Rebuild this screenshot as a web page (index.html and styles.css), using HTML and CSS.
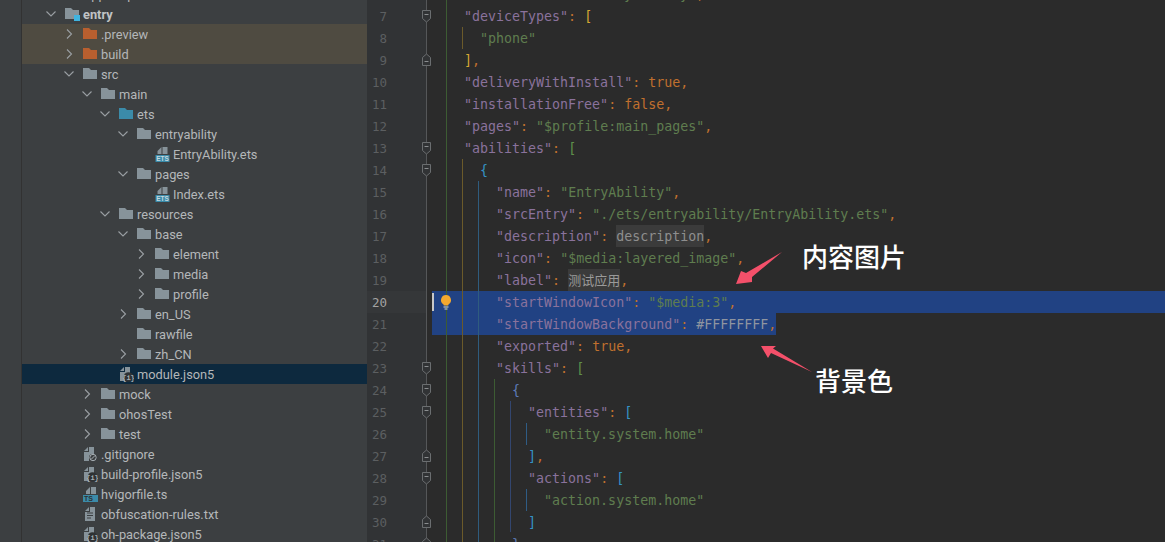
FILE: index.html
```html
<!DOCTYPE html>
<html lang="en">
<head>
<meta charset="utf-8">
<title>module.json5</title>
<link rel="stylesheet" href="styles.css">
</head>
<body>
<svg class="defs" width="0" height="0" aria-hidden="true">
  <symbol id="chev-r" viewBox="0 0 10 12"><path d="M3 1.5 7.5 6 3 10.5" fill="none" stroke="#9a9fa3" stroke-width="1.1"/></symbol>
  <symbol id="chev-d" viewBox="0 0 12 10"><path d="M1.5 2.5 6 7l4.500-4.500" fill="none" stroke="#9a9fa3" stroke-width="1.1"/></symbol>
  <symbol id="folder" viewBox="0 0 14 14"><path d="M0 1h6l2 2h6v9H0z"/></symbol>
  <symbol id="git" viewBox="0 0 15 16">
    <path d="M1 15V5l4-4v4H1zM6 1h5v7H8l-2 2v5H1V6h5z" fill="#87939a"/>
    <circle cx="10" cy="11.500" r="3.200" fill="none" stroke="#a6adb2"/>
    <path d="M8 13.500l4-4" stroke="#a6adb2"/>
  </symbol>
  <symbol id="txt" viewBox="0 0 15 16">
    <path d="M2 15V5l4-4v4H2zM7 1h5v14H2V6h5z" fill="#87939a"/>
    <path d="M4 7h6M4 9.500h6M4 12h4" stroke="#3c3f41"/>
  </symbol>
  <symbol id="fold-open" viewBox="0 0 10 13"><path d="M.5.500h8v8l-4 3.500-4-3.500z" fill="#313335" stroke="#6b6e70"/><path d="M2.500 4.500h4" stroke="#8a8d8f"/></symbol>
  <symbol id="fold-close" viewBox="0 0 10 13"><path d="M.5 12.500h8v-8L4.500 1 .5 4.500z" fill="#313335" stroke="#6b6e70"/><path d="M2.500 8.500h4" stroke="#8a8d8f"/></symbol>
</svg>

<div class="window">
  <aside class="sidebar">
    <div class="stripe"></div>
    <div class="tree">
      <div class="row l0"><span class="chev"><svg class="cr"><use href="#chev-r"/></svg></span><svg class="ico gray"><use href="#folder"/></svg><span>AppScope</span></div>
      <div class="row l0"><span class="chev"><svg class="cd"><use href="#chev-d"/></svg></span><span class="module-ico"><svg class="ico gray"><use href="#folder"/></svg><i class="badge"></i></span><b>entry</b></div>
      <div class="row l1 excluded"><span class="chev"><svg class="cr"><use href="#chev-r"/></svg></span><svg class="ico orange"><use href="#folder"/></svg><span>.preview</span></div>
      <div class="row l1 excluded"><span class="chev"><svg class="cr"><use href="#chev-r"/></svg></span><svg class="ico orange"><use href="#folder"/></svg><span>build</span></div>
      <div class="row l1"><span class="chev"><svg class="cd"><use href="#chev-d"/></svg></span><svg class="ico gray"><use href="#folder"/></svg><span>src</span></div>
      <div class="row l2"><span class="chev"><svg class="cd"><use href="#chev-d"/></svg></span><svg class="ico gray"><use href="#folder"/></svg><span>main</span></div>
      <div class="row l3"><span class="chev"><svg class="cd"><use href="#chev-d"/></svg></span><svg class="ico blue"><use href="#folder"/></svg><span>ets</span></div>
      <div class="row l4"><span class="chev"><svg class="cd"><use href="#chev-d"/></svg></span><svg class="ico gray"><use href="#folder"/></svg><span>entryability</span></div>
      <div class="row l5"><span class="chev"></span><svg class="ico file" viewBox="0 0 14 16"><path d="M2 8V5l4-4v7zM7 1h5v7H7z" fill="#87939a"/><rect x="0" y="9" width="14" height="7" fill="#3b8ba9"/><text x="7" y="15" class="tag">ETS</text></svg><span>EntryAbility.ets</span></div>
      <div class="row l4"><span class="chev"><svg class="cd"><use href="#chev-d"/></svg></span><svg class="ico gray"><use href="#folder"/></svg><span>pages</span></div>
      <div class="row l5"><span class="chev"></span><svg class="ico file" viewBox="0 0 14 16"><path d="M2 8V5l4-4v7zM7 1h5v7H7z" fill="#87939a"/><rect x="0" y="9" width="14" height="7" fill="#3b8ba9"/><text x="7" y="15" class="tag">ETS</text></svg><span>Index.ets</span></div>
      <div class="row l3"><span class="chev"><svg class="cd"><use href="#chev-d"/></svg></span><svg class="ico gray"><use href="#folder"/></svg><span>resources</span></div>
      <div class="row l4"><span class="chev"><svg class="cd"><use href="#chev-d"/></svg></span><svg class="ico gray"><use href="#folder"/></svg><span>base</span></div>
      <div class="row l5"><span class="chev"><svg class="cr"><use href="#chev-r"/></svg></span><svg class="ico gray"><use href="#folder"/></svg><span>element</span></div>
      <div class="row l5"><span class="chev"><svg class="cr"><use href="#chev-r"/></svg></span><svg class="ico gray"><use href="#folder"/></svg><span>media</span></div>
      <div class="row l5"><span class="chev"><svg class="cr"><use href="#chev-r"/></svg></span><svg class="ico gray"><use href="#folder"/></svg><span>profile</span></div>
      <div class="row l4"><span class="chev"><svg class="cr"><use href="#chev-r"/></svg></span><svg class="ico gray"><use href="#folder"/></svg><span>en_US</span></div>
      <div class="row l4"><span class="chev"></span><svg class="ico gray"><use href="#folder"/></svg><span>rawfile</span></div>
      <div class="row l4"><span class="chev"><svg class="cr"><use href="#chev-r"/></svg></span><svg class="ico gray"><use href="#folder"/></svg><span>zh_CN</span></div>
      <div class="row l3 selected"><span class="chev"></span><svg class="ico file" viewBox="0 0 15 16"><path d="M1 15V5l4-4v4H1zM6 1h5v6H8l-2 3v5H1V6h5z" fill="#87939a"/><circle cx="9.500" cy="11" r="4.800" fill="#2f3234"/><text x="9.500" y="13.500" class="brace">{i}</text></svg><span>module.json5</span></div>
      <div class="row l2"><span class="chev"><svg class="cr"><use href="#chev-r"/></svg></span><svg class="ico gray"><use href="#folder"/></svg><span>mock</span></div>
      <div class="row l2"><span class="chev"><svg class="cr"><use href="#chev-r"/></svg></span><svg class="ico gray"><use href="#folder"/></svg><span>ohosTest</span></div>
      <div class="row l2"><span class="chev"><svg class="cr"><use href="#chev-r"/></svg></span><svg class="ico gray"><use href="#folder"/></svg><span>test</span></div>
      <div class="row l1"><span class="chev"></span><svg class="ico file"><use href="#git"/></svg><span>.gitignore</span></div>
      <div class="row l1"><span class="chev"></span><svg class="ico file" viewBox="0 0 15 16"><path d="M1 15V5l4-4v4H1zM6 1h5v6H8l-2 3v5H1V6h5z" fill="#87939a"/><circle cx="9.500" cy="11" r="4.800" fill="#2f3234"/><text x="9.500" y="13.500" class="brace">{i}</text></svg><span>build-profile.json5</span></div>
      <div class="row l1"><span class="chev"></span><svg class="ico file" viewBox="0 0 15 16"><path d="M3 8V5l4-4v7zM8 1h5v7H8z" fill="#87939a"/><rect x="0" y="9" width="15" height="7" fill="#3b8ba9"/><text x="5.500" y="15" class="tag dark">TS</text></svg><span>hvigorfile.ts</span></div>
      <div class="row l1"><span class="chev"></span><svg class="ico file"><use href="#txt"/></svg><span>obfuscation-rules.txt</span></div>
      <div class="row l1"><span class="chev"></span><svg class="ico file" viewBox="0 0 15 16"><path d="M1 15V5l4-4v4H1zM6 1h5v6H8l-2 3v5H1V6h5z" fill="#87939a"/><circle cx="9.500" cy="11" r="4.800" fill="#2f3234"/><text x="9.500" y="13.500" class="brace">{i}</text></svg><span>oh-package.json5</span></div>
    </div>
  </aside>

  <main class="editor">
    <div class="gutter">
      <div class="num">6</div>
      <div class="num">7</div>
      <div class="num">8</div>
      <div class="num">9</div>
      <div class="num">10</div>
      <div class="num">11</div>
      <div class="num">12</div>
      <div class="num">13</div>
      <div class="num">14</div>
      <div class="num">15</div>
      <div class="num">16</div>
      <div class="num">17</div>
      <div class="num">18</div>
      <div class="num">19</div>
      <div class="num current">20</div>
      <div class="num">21</div>
      <div class="num">22</div>
      <div class="num">23</div>
      <div class="num">24</div>
      <div class="num">25</div>
      <div class="num">26</div>
      <div class="num">27</div>
      <div class="num">28</div>
      <div class="num">29</div>
      <div class="num">30</div>
      <div class="num">31</div>
    </div>
    <div class="code">
      <pre class="ln">    <span class="k">"mainElement"</span><span class="p">:</span> <span class="s">"EntryAbility"</span><span class="p">,</span></pre>
      <pre class="ln">    <span class="k">"deviceTypes"</span><span class="p">:</span> <span class="amber">[</span></pre>
      <pre class="ln">      <span class="s">"phone"</span></pre>
      <pre class="ln">    <span class="amber">]</span><span class="p">,</span></pre>
      <pre class="ln">    <span class="k">"deliveryWithInstall"</span><span class="p">:</span> <span class="p">true,</span></pre>
      <pre class="ln">    <span class="k">"installationFree"</span><span class="p">:</span> <span class="p">false,</span></pre>
      <pre class="ln">    <span class="k">"pages"</span><span class="p">:</span> <span class="s">"$profile:main_pages"</span><span class="p">,</span></pre>
      <pre class="ln">    <span class="k">"abilities"</span><span class="p">:</span> <span class="green">[</span></pre>
      <pre class="ln">      <span class="sky">{</span></pre>
      <pre class="ln">        <span class="k">"name"</span><span class="p">:</span> <span class="s">"EntryAbility"</span><span class="p">,</span></pre>
      <pre class="ln">        <span class="k">"srcEntry"</span><span class="p">:</span> <span class="s">"./ets/entryability/EntryAbility.ets"</span><span class="p">,</span></pre>
      <pre class="ln">        <span class="k">"description"</span><span class="p">:</span> <span class="fold">description</span><span class="p">,</span></pre>
      <pre class="ln">        <span class="k">"icon"</span><span class="p">:</span> <span class="s">"$media:layered_image"</span><span class="p">,</span></pre>
      <pre class="ln">        <span class="k">"label"</span><span class="p">:</span> <span class="fold cjk">测试应用</span><span class="p">,</span></pre>
      <pre class="ln sel-full">        <span class="k">"startWindowIcon"</span><span class="p">:</span> <span class="s">"$media:3"</span><span class="p">,</span></pre>
      <pre class="ln"><span class="sel-part">        <span class="k">"startWindowBackground"</span><span class="p">:</span> <span class="v">#FFFFFFFF</span><span class="p">,</span></span></pre>
      <pre class="ln">        <span class="k">"exported"</span><span class="p">:</span> <span class="p">true,</span></pre>
      <pre class="ln">        <span class="k">"skills"</span><span class="p">:</span> <span class="green">[</span></pre>
      <pre class="ln">          <span class="indigo">{</span></pre>
      <pre class="ln">            <span class="k">"entities"</span><span class="p">:</span> <span class="sky">[</span></pre>
      <pre class="ln">              <span class="s">"entity.system.home"</span></pre>
      <pre class="ln">            <span class="sky">]</span><span class="p">,</span></pre>
      <pre class="ln">            <span class="k">"actions"</span><span class="p">:</span> <span class="sky">[</span></pre>
      <pre class="ln">              <span class="s">"action.system.home"</span></pre>
      <pre class="ln">            <span class="sky">]</span></pre>
      <pre class="ln">          <span class="indigo">}</span></pre>
    </div>
  </main>
</div>

<!-- Overlays: gutter marks, rainbow indent guides, annotations -->
<i class="guide g1"></i><i class="guide g2a"></i><i class="guide g2b"></i><i class="guide g3"></i><i class="guide g4"></i><i class="guide g5"></i><i class="guide g6a"></i><i class="guide g6b"></i>
<i class="caret"></i>
<svg class="bulb" viewBox="0 0 12 15"><path d="M6 0a5 5 0 0 1 3 9c-.6.5-.8 1-.8 1.500H3.800c0-.5-.2-1-.8-1.500A5 5 0 0 1 6 0z" fill="#f4a82e"/><path d="M3.500 12h5M4.500 14h3" stroke="#d8d8d8"/></svg>
<svg class="fm f7"><use href="#fold-open"/></svg>
<svg class="fm f9"><use href="#fold-close"/></svg>
<svg class="fm f13"><use href="#fold-open"/></svg>
<svg class="fm f14"><use href="#fold-open"/></svg>
<svg class="fm f23"><use href="#fold-open"/></svg>
<svg class="fm f24"><use href="#fold-open"/></svg>
<svg class="fm f25"><use href="#fold-open"/></svg>
<svg class="fm f27"><use href="#fold-close"/></svg>
<svg class="fm f28"><use href="#fold-open"/></svg>
<svg class="fm f30"><use href="#fold-close"/></svg>
<svg class="fm f31"><use href="#fold-close"/></svg>

<svg class="arrows" viewBox="0 0 1165 542">
  <polygon points="782,252 752,277 752,282 736,284 741,271 746,273" fill="#f4506a"/>
  <polygon points="812,372 771,353 768,358 761,346 776,346 773,348.500" fill="#f4506a"/>
</svg>
<div class="note note-a">内容图片</div>
<div class="note note-b">背景色</div>
</body>
</html>
```

FILE: styles.css
```css
* { box-sizing: border-box; }
html, body { margin: 0; height: 100%; overflow: hidden; background: #2b2b2b; }
.defs { position: absolute; }

.window { display: flex; width: 1165px; height: 542px; overflow: hidden; }

/* Project tree */
.sidebar { display: flex; flex: 0 0 367px; background: #3c3f41; overflow: hidden; }
.stripe { flex: 0 0 22px; border-right: 1px solid #323232; }
.tree {
  flex: 1;
  margin-top: -16px;
  font: 12.800px/18px Roboto, "Open Sans", sans-serif;
  color: #b4b7b9;
}
.row { display: flex; align-items: center; height: 20px; white-space: nowrap; }
.row > span:last-child, .row > b { margin-top: 2px; }
.row b { font-weight: 700; color: #c0c3c5; }
.l0 { padding-left: 20px; }
.l1 { padding-left: 38px; }
.l2 { padding-left: 56px; }
.l3 { padding-left: 74px; }
.l4 { padding-left: 92px; }
.l5 { padding-left: 110px; }
.excluded { background: #4f4b41; }
.selected { background: #0d293e; }
.chev { flex: 0 0 18px; margin-right: 5px; height: 20px; display: flex; align-items: center; justify-content: center; }
.cr { width: 10px; height: 12px; }
.cd { width: 12px; height: 10px; }
.ico { flex: 0 0 14px; width: 14px; height: 14px; margin-right: 4px; }
.ico.file { height: 16px; width: 15px; flex-basis: 15px; margin-right: 3px; }
.gray { fill: #87939a; }
.orange { fill: #b85f2f; }
.blue { fill: #3b8ba9; }
.module-ico { position: relative; display: flex; }
.badge { position: absolute; left: 9px; top: 8px; width: 6px; height: 6px; background: #3fb4e0; }
.tag { font: 700 6.5px "Liberation Sans", sans-serif; fill: #c5d8df; text-anchor: middle; }
.tag.dark { fill: #2f3234; font-size: 7px; }
.brace { font: 700 7px "Liberation Mono", monospace; fill: #a6adb2; text-anchor: middle; }

/* Editor */
.editor { flex: 1; display: flex; min-width: 0; margin-top: -17px; }
.gutter {
  flex: 0 0 60px;
  background: #313335;
  border-right: 1px solid #555759;
  font: 12.500px/24px "DejaVu Sans Mono", monospace;
  color: #5c5f61;
}
.num { height: 22px; width: 20px; text-align: right; }
.num.current { color: #a4a3a3; width: 100%; padding-right: 39px; background: #353739; }
.code {
  flex: 1;
  min-width: 0;
  padding-left: 5px;
  font: 13.300px/24px "DejaVu Sans Mono", "Noto Sans CJK SC", monospace;
  color: #a9b7c6;
}
.ln { margin: 0; height: 22px; font: inherit; white-space: pre; }
.k { color: #8a729c; }
.s { color: #5f7d4f; }
.p { color: #c0702e; }
.v { color: #8f95a0; }
.amber { color: #d6a632; }
.green { color: #5f8f4a; }
.sky { color: #3592c4; }
.indigo { color: #5c7ab8; }
.fold { display: inline-block; height: 22px; background: #3b3b3b; color: #8e8e8e; vertical-align: top; }
.fold.cjk { width: 52px; font-size: 13px; color: #9a9a9a; }
.sel-full { background: #214283; }
.sel-part { display: inline-block; height: 22px; width: 344px; background: #214283; vertical-align: top; }

/* Overlays */
.guide { position: absolute; width: 1px; }
.g1 { left: 446px; top: 0; height: 542px; background: #3d5c33; }
.g2a { left: 462px; top: 27px; height: 22px; background: #6b5a2a; }
.g2b { left: 462px; top: 159px; height: 383px; background: #6b5a2a; }
.g3 { left: 478px; top: 181px; height: 361px; background: #2f5c7e; }
.g4 { left: 494px; top: 379px; height: 163px; background: #3d5c33; }
.g5 { left: 510px; top: 401px; height: 131px; background: #33466f; }
.g6a { left: 526px; top: 423px; height: 22px; background: #2f5c85; }
.g6b { left: 526px; top: 489px; height: 22px; background: #2f5c85; }
.caret { position: absolute; left: 432px; top: 293px; width: 2px; height: 18px; background: #c8c8c8; }
.bulb { position: absolute; left: 440px; top: 295px; width: 12px; height: 15px; }

.fm { position: absolute; left: 422px; width: 10px; height: 13px; }
.f7 { top: 10px; }
.f9 { top: 53px; }
.f13 { top: 142px; }
.f14 { top: 164px; }
.f23 { top: 362px; }
.f24 { top: 384px; }
.f25 { top: 406px; }
.f27 { top: 449px; }
.f28 { top: 472px; }
.f30 { top: 515px; }
.f31 { top: 537px; }

.arrows { position: absolute; left: 0; top: 0; width: 1165px; height: 542px; pointer-events: none; }
.note {
  position: absolute;
  font: 500 26px/36px "Noto Sans CJK SC", sans-serif;
  color: #ffffff;
  white-space: nowrap;
}
.note-a { left: 802px; top: 238px; }
.note-b { left: 815px; top: 362px; }
```
